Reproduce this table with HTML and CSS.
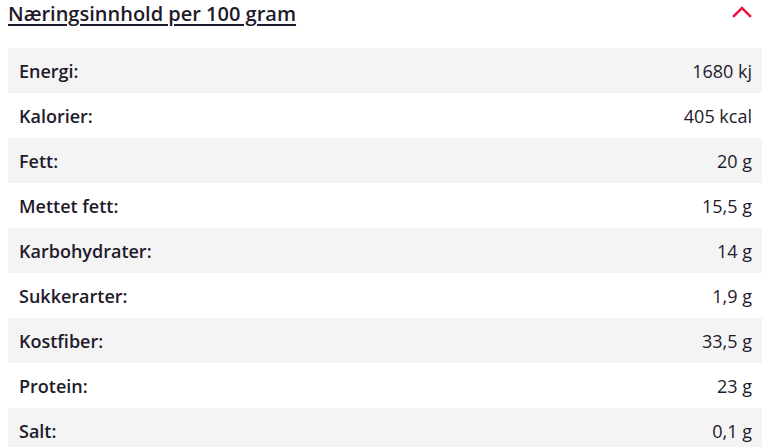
FILE: index.html
```html
<!DOCTYPE html>
<html lang="no">
<head>
<meta charset="utf-8">
<link rel="stylesheet" href="styles.css">
</head>
<body>
<section class="panel">
  <header class="panel-head">
    <h2 class="title">Næringsinnhold per 100 gram</h2>
    <svg class="chevron" width="20" height="12" viewBox="0 0 20 12"><path d="M2 10 L10 2 L18 10" fill="none" stroke="#e8173f" stroke-width="2.6" stroke-linecap="square"/></svg>
  </header>
  <div class="rows">
    <div class="row"><span class="label">Energi:</span><span class="value">1680 kj</span></div>
    <div class="row"><span class="label">Kalorier:</span><span class="value">405 kcal</span></div>
    <div class="row"><span class="label">Fett:</span><span class="value">20 g</span></div>
    <div class="row"><span class="label">Mettet fett:</span><span class="value">15,5 g</span></div>
    <div class="row"><span class="label">Karbohydrater:</span><span class="value">14 g</span></div>
    <div class="row"><span class="label">Sukkerarter:</span><span class="value">1,9 g</span></div>
    <div class="row"><span class="label">Kostfiber:</span><span class="value">33,5 g</span></div>
    <div class="row"><span class="label">Protein:</span><span class="value">23 g</span></div>
    <div class="row"><span class="label">Salt:</span><span class="value">0,1 g</span></div>
  </div>
</section>
</body>
</html>
```
FILE: styles.css
```css
html, body { margin: 0; padding: 0; background: #fff; }
body { font-family: "Open Sans", "Noto Sans", sans-serif; color: #1f1a2b; }
.panel { margin: 0 1px 0 8px; }
.panel-head { display: flex; align-items: center; justify-content: space-between; height: 28px; margin-bottom: 20px; }
.title { margin: 0; font-size: 20px; font-weight: 600; text-decoration: underline; text-decoration-thickness: 2px; text-underline-offset: 3px; line-height: 28px; }
.chevron { margin-right: 10px; margin-top: -4px; }
.rows { display: flex; flex-direction: column; }
.row { display: flex; justify-content: space-between; align-items: center; height: 45px; padding: 0 10px 0 11px; font-size: 18px; }
.row:nth-child(odd) { background: #f4f4f4; }
.label { font-weight: 600; }
.value { font-weight: 400; }
```
